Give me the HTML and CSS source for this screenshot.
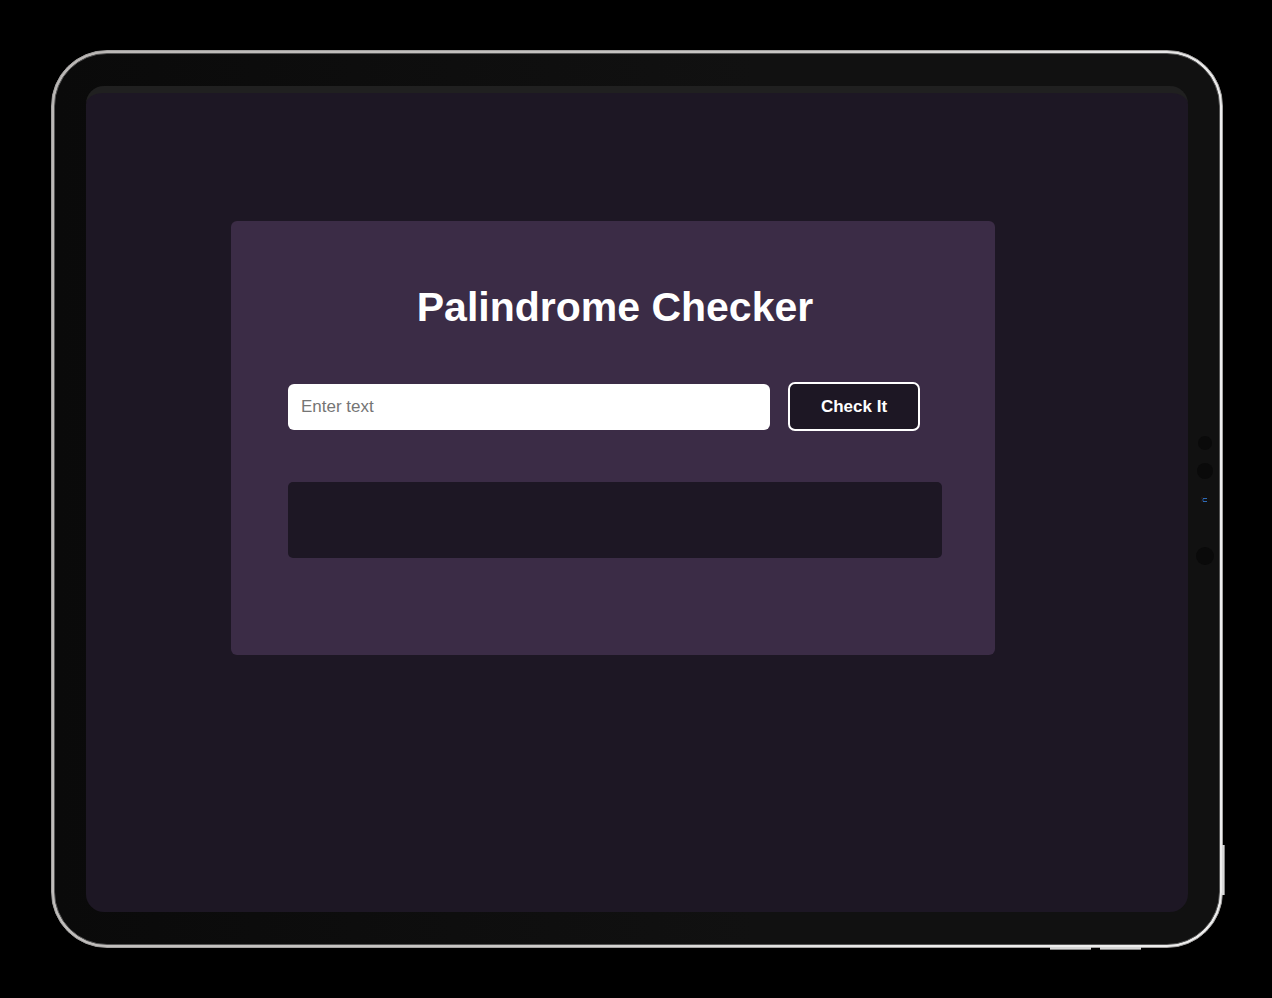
FILE: index.html
```html
<!DOCTYPE html>
<html lang="en">
<head>
<meta charset="utf-8">
<meta name="viewport" content="width=device-width, initial-scale=1">
<title>Palindrome Checker</title>
<link rel="stylesheet" href="styles.css">
</head>
<body>
<div class="tablet">
  <span class="key key-power"></span>
  <span class="key key-volume-down"></span>
  <span class="key key-volume-up"></span>
  <div class="bezel">
    <main class="screen">
      <section class="card">
        <h1 class="title">Palindrome Checker</h1>
        <form class="checker">
          <input class="text-input" type="text" placeholder="Enter text" aria-label="Enter text">
          <button class="check-button" type="button">Check It</button>
        </form>
        <output class="result"></output>
      </section>
    </main>
    <svg class="sensors" width="24" height="140" viewBox="0 0 24 140" aria-hidden="true">
      <g fill="#0a0a0a">
        <circle cx="12" cy="13" r="7"/>
        <circle cx="12" cy="41" r="8"/>
        <circle cx="12" cy="126" r="9"/>
      </g>
      <path d="M8 68h2M8 71h2" stroke="#35201d"/>
      <path d="M10 68.500h4M10 71.500h4" stroke="#2f6bb5"/>
      <path d="M9 69.500h2M9 70.500h2" stroke="#16345c"/>
    </svg>
  </div>
</div>
</body>
</html>
```
FILE: styles.css
```css
* {
  box-sizing: border-box;
}

body {
  margin: 0;
  min-height: 100vh;
  padding: 50px 49px 50px 51px;
  display: flex;
  background: #000;
  font-family: "Liberation Sans", Arial, sans-serif;
}

.tablet {
  position: relative;
  flex: 1;
  display: flex;
  padding: 2px;
  border: 1px solid #a3a1a0;
  border-radius: 56px;
  background: linear-gradient(110deg, #bbb8b6, #c8c6c4 50%, #eee 80%);
}

.bezel {
  position: relative;
  flex: 1;
  display: flex;
  padding: 32px 31px 32px 31px;
  border: 1px solid #555;
  border-radius: 53px;
  background: linear-gradient(90deg, #0a0a0a, #111 60%);
}

.screen {
  flex: 1;
  padding: 128px 193px 128px 145px;
  border-top: 7px solid #202020;
  border-radius: 18px;
  background: #1d1724;
}

.card {
  padding: 64px 53px 97px 57px;
  border-radius: 6px;
  background: #3b2c46;
}

.title {
  margin: 0;
  color: #fff;
  font-size: 41px;
  line-height: 44px;
  text-align: center;
}

.checker {
  display: flex;
  align-items: center;
  gap: 18px;
  margin: 53px 22px 51px 0;
}

.text-input {
  flex: 1;
  min-width: 0;
  height: 46px;
  padding: 0 13px;
  border: 0;
  border-radius: 6px;
  background: #fff;
  color: #1d1724;
  font: 17px "Liberation Sans", Arial, sans-serif;
}

.text-input::placeholder {
  color: #757575;
}

.check-button {
  width: 132px;
  height: 49px;
  padding: 0;
  border: 2px solid #fff;
  border-radius: 7px;
  background: #1d1724;
  color: #fff;
  font: bold 17px "Liberation Sans", Arial, sans-serif;
}

.result {
  display: block;
  min-height: 76px;
  border-radius: 5px;
  background: #1d1724;
}

.sensors {
  position: absolute;
  top: 376px;
  right: 2px;
}

.key {
  position: absolute;
  background: #d8d8d8;
}

.key-power {
  right: -3px;
  bottom: 52px;
  width: 3px;
  height: 50px;
  border-right: 1px solid #888;
}

.key-volume-down,
.key-volume-up {
  bottom: -3px;
  height: 3px;
  width: 41px;
  border-bottom: 1px solid #888;
}

.key-volume-down {
  right: 131px;
}

.key-volume-up {
  right: 81px;
}
```
